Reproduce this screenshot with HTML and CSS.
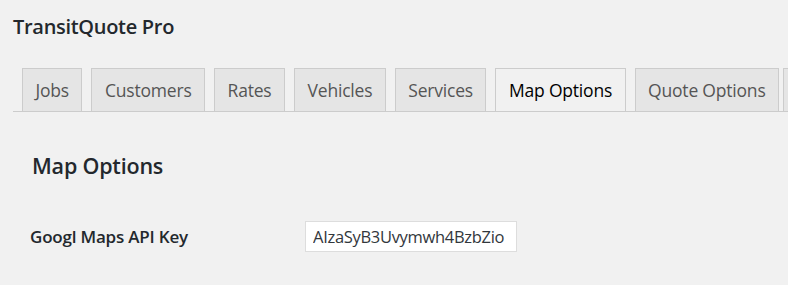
FILE: index.html
```html
<!DOCTYPE html>
<html lang="en">
<head>
<meta charset="utf-8">
<title>TransitQuote Pro</title>
<link rel="stylesheet" href="styles.css">
</head>
<body>
<div class="wrap">
  <h2 class="page-title">TransitQuote Pro</h2>
  <nav class="tabs">
    <a class="tab">Jobs</a>
    <a class="tab">Customers</a>
    <a class="tab">Rates</a>
    <a class="tab">Vehicles</a>
    <a class="tab">Services</a>
    <a class="tab tab-active">Map Options</a>
    <a class="tab">Quote Options</a>
    <a class="tab tab-more">Settings</a>
  </nav>
  <section class="panel">
    <h3 class="panel-title">Map Options</h3>
    <div class="field-row">
      <label class="field-label" for="api-key">Googl Maps API Key</label>
      <input class="field-input" id="api-key" type="text" value="AIzaSyB3Uvymwh4BzbZio">
    </div>
  </section>
</div>
</body>
</html>
```
FILE: styles.css
```css
html, body {
  margin: 0;
  padding: 0;
  background: #f1f1f1;
  overflow: hidden;
}
body {
  font-family: "Open Sans", "Noto Sans", sans-serif;
  color: #23282d;
}
.wrap {
  padding: 12px 0 0 13px;
}
.page-title {
  margin: 0;
  font-size: 20px;
  letter-spacing: -0.3px;
  line-height: 30px;
  font-weight: 600;
  color: #23282d;
}
.tabs {
  display: flex;
  flex-wrap: nowrap;
  margin-top: 26px;
  border-bottom: 1px solid #ccc;
  padding-left: 9px;
  gap: 9px;
  overflow: hidden;
  height: 43px;
}
.tab {
  flex: none;
  display: block;
  box-sizing: border-box;
  height: 44px;
  padding: 6px 12.5px;
  border: 1px solid #ccc;
  background: #e5e5e5;
  color: #555;
  font-size: 17.5px;
  letter-spacing: -0.2px;
  line-height: 30px;
  font-weight: 400;
  white-space: nowrap;
}
.tab-active {
  background: #f1f1f1;
  border-bottom-color: #f1f1f1;
  color: #000;
}
.tab-more {
  margin-left: -5px;
}
.panel {
  padding: 0 0 0 19px;
}
.panel-title {
  margin: 38px 0 0 0;
  font-size: 21.5px;
  letter-spacing: -0.2px;
  line-height: 32px;
  font-weight: 600;
  color: #23282d;
}
.field-row {
  display: flex;
  align-items: center;
  margin-top: 39px;
}
.field-label {
  width: 275px;
  flex: none;
  margin-left: -2px;
  font-size: 17px;
  letter-spacing: -0.2px;
  font-weight: 600;
  color: #23282d;
}
.field-input {
  box-sizing: border-box;
  width: 212px;
  height: 31px;
  margin: 0;
  padding: 0 7px;
  border: 1px solid #ddd;
  background: #fff;
  font-family: inherit;
  font-size: 16.5px;
  letter-spacing: -0.3px;
  color: #32373c;
  outline: none;
}
```
